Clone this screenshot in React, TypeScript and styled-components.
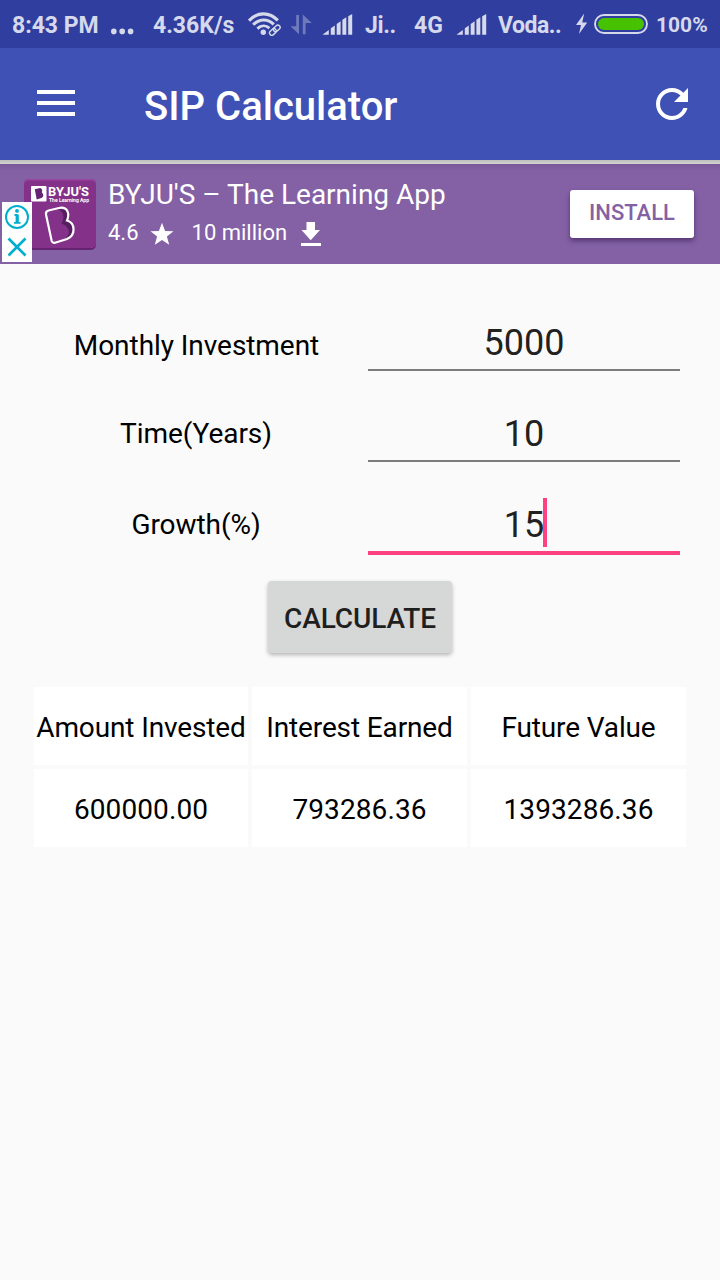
import React from "react";
import styled, { createGlobalStyle } from "styled-components";

const GlobalStyle = createGlobalStyle`
  *, *::before, *::after { box-sizing: border-box; }
  body { margin: 0; background: #fafafa; font-family: Roboto, "Liberation Sans", sans-serif; }
`;

const Screen = styled.div`
  width: 720px;
  height: 1280px;
  display: flex;
  flex-direction: column;
  background: #fafafa;
  overflow: hidden;
  white-space: nowrap;
`;

const StatusBar = styled.div`
  height: 48px;
  padding: 0 0 0 12px;
  background: #303f9f;
  display: grid;
  grid-template-columns: 99px 42px 95px 43px 31px 43px 49px 42px 42px 78px 18px 62px 1fr;
  align-items: center;
  svg { display: block; }
`;

const StatusText = styled.span<{ $size?: number; $spacing?: number }>`
  padding-top: 3px;
  color: #d6d9ec;
  font-weight: 700;
  font-size: ${(p) => p.$size ?? 23}px;
  letter-spacing: ${(p) => p.$spacing ?? 0}px;
  line-height: 45px;
`;

const Toolbar = styled.header`
  height: 112px;
  background: #3f51b5;
  display: flex;
  align-items: center;
  padding: 0 24px 0 37px;
`;

const MenuButton = styled.button`
  display: flex;
  flex-direction: column;
  gap: 7px;
  width: 38px;
  padding: 0;
  margin: 0 69px 2px 0;
  border: 0;
  background: none;
`;

const MenuBar = styled.span`
  height: 4px;
  background: #fff;
`;

const Title = styled.h1`
  flex: 1;
  margin: 6px 0 0;
  color: #fff;
  font-size: 40px;
  font-weight: 500;
  line-height: 48px;
`;

const ToolbarShadow = styled.div`
  height: 4px;
  background: linear-gradient(#bdbdbd, #d2d2d2);
`;

const AdBanner = styled.section`
  position: relative;
  height: 100px;
  background: linear-gradient(#79589a 0, #8260a3 7px, #8461a5 12px);
  display: flex;
  align-items: flex-start;
  padding: 15px 26px 0 24px;
`;

const AppIcon = styled.div`
  width: 72px;
  height: 71px;
  margin-right: 12px;
`;

const AdCopy = styled.div`
  flex: 1;
  color: #fff;
`;

const AdTitle = styled.div`
  font-size: 28px;
  line-height: 32px;
`;

const AdMeta = styled.div`
  display: flex;
  align-items: center;
  margin-top: 8px;
  font-size: 22px;
  line-height: 28px;
  height: 28px;
  svg { margin-top: 1px; }
`;

const Rating = styled.span`
  margin-right: 11px;
`;

const Downloads = styled.span`
  margin: 0 13px 0 18px;
`;

const InstallButton = styled.button`
  width: 124px;
  height: 48px;
  margin-top: 11px;
  padding: 0 0 3px;
  border: 0;
  border-radius: 3px;
  background: #fff;
  color: #8461a5;
  font: 500 22px/26px Roboto, sans-serif;
  box-shadow: 0 3px 5px rgba(40, 15, 65, 0.5);
`;

const AdChoices = styled.div`
  position: absolute;
  left: 2px;
  top: 38px;
  width: 30px;
  height: 60px;
  background: #fff;
`;

const Form = styled.form`
  padding: 36px 40px 0 24px;
  display: flex;
  flex-direction: column;
`;

const FieldRow = styled.div`
  height: 91px;
  display: grid;
  grid-template-columns: 344px 312px;
`;

const Label = styled.label<{ $raised?: boolean }>`
  padding: ${(p) => (p.$raised ? "26px 0 0" : "29px 0 0 1px")};
  text-align: center;
  font-size: 28px;
  letter-spacing: -0.06px;
  line-height: 33px;
  color: #000;
`;

const Field = styled.div<{ $active?: boolean }>`
  height: ${(p) => (p.$active ? 73 : 71)}px;
  border-bottom: ${(p) => (p.$active ? "4px solid #ff4081" : "2px solid #7c7c7c")};
  padding-top: 22px;
  text-align: center;
  font-size: 36px;
  line-height: 42px;
  color: #212121;
`;

const FieldValue = styled.span`
  position: relative;
`;

const Caret = styled.span`
  position: absolute;
  right: -3px;
  top: -6px;
  width: 4px;
  height: 49px;
  background: #ff4081;
`;

const CalculateButton = styled.button`
  align-self: center;
  width: 184px;
  height: 72px;
  margin: 8px -16px 0 0;
  padding: 2px 0 0;
  border: 0;
  border-radius: 4px;
  background: #d6d7d7;
  color: #1f1f1f;
  font: 500 28px/33px Roboto, sans-serif;
  letter-spacing: -0.1px;
  box-shadow: 0 2px 4px rgba(0, 0, 0, 0.28);
`;

const Results = styled.div`
  display: grid;
  grid-template-columns: 214px 215px 215px;
  grid-auto-rows: 78px;
  gap: 4px;
  margin: 34px 34px 0;
`;

const Cell = styled.div<{ $header?: boolean }>`
  display: flex;
  align-items: center;
  justify-content: center;
  padding-top: 3px;
  background: #fff;
  color: #000;
  font-size: 28px;
  letter-spacing: ${(p) => (p.$header ? -0.13 : 0.1)}px;
  line-height: 33px;
`;

const Ellipsis = () => (
  <svg width="24" height="24" viewBox="0 0 24 24" fill="#d6d9ec">
    <circle cx="2.8" cy="19.4" r="2.8" />
    <circle cx="11.2" cy="19.4" r="2.8" />
    <circle cx="19.6" cy="19.4" r="2.8" />
  </svg>
);

const Wifi = () => (
  <svg width="34" height="24" viewBox="0 0 34 24" fill="none" stroke="#d6d9ec">
    <path d="M1 8.6C9.3-0.3 21.5-0.3 29.8 8.4" strokeWidth="3.1" />
    <path d="M5.2 12.8C11.3 6.4 19.8 6.4 25.8 12.4" strokeWidth="3.1" />
    <path d="M9.4 16.6C13.1 13 18 13 21.4 16.1" strokeWidth="2.9" />
    <circle cx="15.3" cy="20.2" r="2.7" fill="#d6d9ec" stroke="none" />
    <g strokeWidth="1.4" transform="rotate(-43 27 18)">
      <rect x="20.4" y="15.7" width="7.5" height="4.6" rx="2.3" />
      <rect x="25.6" y="15.7" width="7.5" height="4.6" rx="2.3" />
    </g>
  </svg>
);

const DataArrows = () => (
  <svg width="22" height="24" viewBox="0 0 22 24" fill="#6f7abc">
    <path d="M5.2 3H8V22.3L-.5 14.3H5.2z" />
    <path d="M11.8 22.3h2.8V11h6.2L11.8 2.5z" />
  </svg>
);

const Signal = () => (
  <svg width="31" height="24" viewBox="0 0 31 24" fill="#d6d9ec">
    <path d="M0.5 22.8L6.8 18V22.8zM8.8 22.8V16.2L12.8 13.5V22.8zM14.7 22.8V12L18.6 9.2V22.8zM20.4 22.8V7.8L24.3 5.2V22.8zM26.2 22.8V4.2L30.2 2V22.8z" />
  </svg>
);

const Bolt = () => (
  <svg width="13" height="24" viewBox="0 0 13 24" fill="#d6d9ec">
    <path d="M8.2 1.6L0 13h5L3 22 11.2 10.4H6.2z" />
  </svg>
);

const Battery = () => (
  <svg width="54" height="24" viewBox="0 0 54 24">
    <rect x="1" y="3" width="52" height="18" rx="9" fill="#303f9f" stroke="#d6d9ec" strokeWidth="1.9" />
    <rect x="4" y="6" width="46" height="12" rx="6" fill="#47c203" />
  </svg>
);

const Refresh = () => (
  <svg width="48" height="48" viewBox="0 0 24 24" fill="#fff">
    <path d="M17.65 6.35C16.2 4.9 14.21 4 12 4c-4.42 0-7.99 3.58-7.99 8s3.57 8 7.99 8c3.73 0 6.84-2.55 7.73-6h-2.08c-.82 2.33-3.04 4-5.65 4-3.31 0-6-2.69-6-6s2.69-6 6-6c1.66 0 3.14.69 4.22 1.78L13 11h7V4l-2.35 2.35z" />
  </svg>
);

const ByjusLogo = () => (
  <svg width="72" height="71" viewBox="0 0 72 71" fontFamily="Roboto, sans-serif" fill="#fff">
    <rect width="72" height="71" rx="5" fill="#642470" />
    <rect width="72" height="69" rx="5" fill="#9a45a0" />
    <rect y="1.5" width="72" height="67.5" rx="5" fill="#833189" />
    <rect x="7" y="7" width="15.5" height="15.5" rx="1" />
    <path d="M10.8 10.3L16.2 9q3 1.2 1.6 4.2 3.2 3.7-.4 5.8L12.7 20.4z" fill="#642470" />
    <text x="24" y="16.5" fontSize="13" fontWeight="700" textLength="41" lengthAdjust="spacingAndGlyphs">BYJU'S</text>
    <text x="25" y="22.5" fontSize="5.2" fontWeight="700" textLength="40" lengthAdjust="spacingAndGlyphs">The Learning App</text>
    <path d="M34 30.5C42 29 45 34 42.5 41.5C50.5 44.5 51 56 41 60C48 54 45 47.5 37.5 44.5C41 38 40 33 34 30.5z" fill="#54205f" />
    <path d="M24.5 31.5L36 28.8C43.5 28 46 34.5 43 41.5C51.5 44 52 56 43 60L31 63.8Q28.5 64.5 27.7 62L22 35.5Q21.5 32.3 24.5 31.5z" fill="none" stroke="#fff" strokeWidth="2.2" />
  </svg>
);

const Star = () => (
  <svg width="24" height="24" viewBox="0 0 24 24" fill="#fff">
    <path d="M12 .8l3.1 8.1 8.4.3-6.6 5.3 2.3 8.2-7.2-4.7-7.2 4.7 2.3-8.2L.5 9.2l8.4-.3z" />
  </svg>
);

const Download = () => (
  <svg width="22" height="26" viewBox="0 0 22 26" fill="#fff">
    <path d="M6.5 1h8.5v8H20l-9.3 10.3L1.5 9h5zM1 22h20v3H1z" />
  </svg>
);

const AdChoiceIcons = () => (
  <svg width="30" height="60" viewBox="0 0 30 60" fill="none" stroke="#00aecd">
    <circle cx="15" cy="15" r="11" strokeWidth="2" />
    <path d="M15.2 12.5v8" strokeWidth="3.2" />
    <path d="M12.5 13h3M12 20.8h6.5" strokeWidth="1.8" />
    <circle cx="15" cy="8.9" r="1.9" fill="#00aecd" stroke="none" />
    <path d="M6.5 36.5l17 17M23.5 36.5l-17 17" strokeWidth="2.7" />
  </svg>
);

const headings = ["Amount Invested", "Interest Earned", "Future Value"];
const values = ["600000.00", "793286.36", "1393286.36"];

export default function App() {
  return (
    <Screen>
      <GlobalStyle />
      <StatusBar>
        <StatusText>8:43 PM</StatusText>
        <Ellipsis />
        <StatusText>4.36K/s</StatusText>
        <Wifi />
        <DataArrows />
        <Signal />
        <StatusText $spacing={-0.4}>Ji..</StatusText>
        <StatusText>4G</StatusText>
        <Signal />
        <StatusText $spacing={-0.5}>Voda..</StatusText>
        <Bolt />
        <Battery />
        <StatusText $size={21}>100%</StatusText>
      </StatusBar>
      <Toolbar>
        <MenuButton type="button" aria-label="Menu">
          <MenuBar />
          <MenuBar />
          <MenuBar />
        </MenuButton>
        <Title>SIP Calculator</Title>
        <Refresh />
      </Toolbar>
      <ToolbarShadow />
      <AdBanner>
        <AppIcon><ByjusLogo /></AppIcon>
        <AdCopy>
          <AdTitle>BYJU'S – The Learning App</AdTitle>
          <AdMeta>
            <Rating>4.6</Rating>
            <Star />
            <Downloads>10 million</Downloads>
            <Download />
          </AdMeta>
        </AdCopy>
        <InstallButton type="button">INSTALL</InstallButton>
        <AdChoices><AdChoiceIcons /></AdChoices>
      </AdBanner>
      <Form>
        <FieldRow>
          <Label>Monthly Investment</Label>
          <Field>5000</Field>
        </FieldRow>
        <FieldRow>
          <Label $raised>Time(Years)</Label>
          <Field>10</Field>
        </FieldRow>
        <FieldRow>
          <Label $raised>Growth(%)</Label>
          <Field $active>
            <FieldValue>15<Caret /></FieldValue>
          </Field>
        </FieldRow>
        <CalculateButton type="button">CALCULATE</CalculateButton>
      </Form>
      <Results>
        {headings.map((text) => <Cell key={text} $header>{text}</Cell>)}
        {values.map((text) => <Cell key={text}>{text}</Cell>)}
      </Results>
    </Screen>
  );
}
